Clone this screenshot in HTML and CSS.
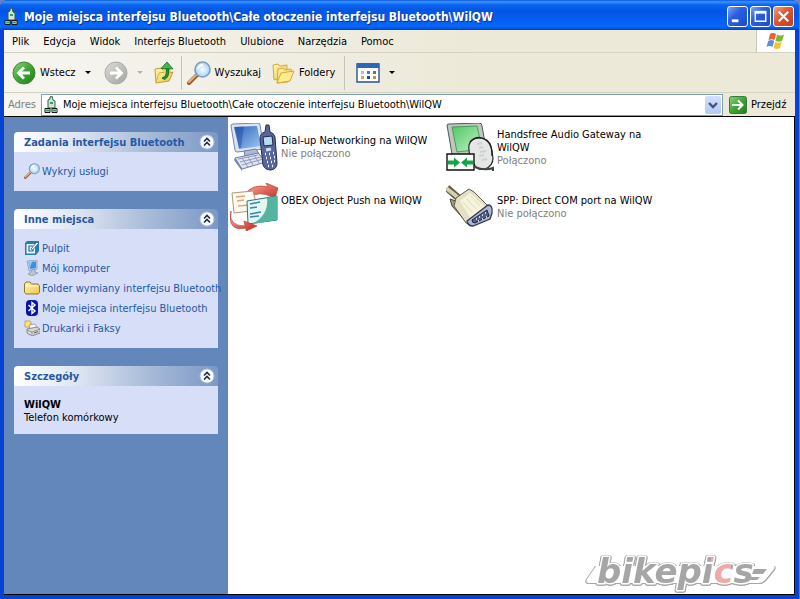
FILE: index.html
```html
<!DOCTYPE html>
<html lang="pl">
<head>
<meta charset="utf-8">
<title>Moje miejsca interfejsu Bluetooth</title>
<link rel="stylesheet" href="styles.css">
</head>
<body>
<svg class="defs" aria-hidden="true">
  <defs>
    <linearGradient id="green" x1="0" y1="0" x2="1" y2="1"><stop offset="0" stop-color="#8bd47c"/><stop offset=".5" stop-color="#3fa535"/><stop offset="1" stop-color="#237a1c"/></linearGradient>
    <linearGradient id="grey" x1="0" y1="0" x2="1" y2="1"><stop offset="0" stop-color="#dcdcd8"/><stop offset="1" stop-color="#a3a3a0"/></linearGradient>
    <linearGradient id="folder" x1="0" y1="0" x2="1" y2="1"><stop offset="0" stop-color="#fff6b0"/><stop offset="1" stop-color="#edc44c"/></linearGradient>
    <radialGradient id="lens"><stop offset="0" stop-color="#f4fcff"/><stop offset="1" stop-color="#a9d7f5"/></radialGradient>
    <linearGradient id="screen" x1="0" y1="0" x2="1" y2="1"><stop offset="0" stop-color="#2f62b8"/><stop offset="1" stop-color="#9cc8f4"/></linearGradient>
    <linearGradient id="mint" x1="0" y1="0" x2="1" y2="1"><stop offset="0" stop-color="#4fc763"/><stop offset="1" stop-color="#c4f3c9"/></linearGradient>
    <linearGradient id="red" x1="0" y1="0" x2="1" y2="1"><stop offset="0" stop-color="#f9b6a4"/><stop offset="1" stop-color="#c8201c"/></linearGradient>
    <linearGradient id="logo" gradientUnits="userSpaceOnUse" x1="0" y1="0" x2="196" y2="0"><stop offset=".66" stop-color="#a6a6a6"/><stop offset=".66" stop-color="#eeaaaa"/><stop offset=".76" stop-color="#eeaaaa"/><stop offset=".76" stop-color="#a6a6a6"/></linearGradient>
    <symbol id="device" viewBox="0 0 14 18">
      <path d="M6 1l2-1 1 4 2 1v7H4V4l2-1z" fill="#cfe6d4" stroke="#385a48"/><path d="M6 6h3v2H6z" fill="#3b9a5c"/>
      <path d="M1 12.500h5v4H1zM8 12.500h5v4H8z" fill="#f4fff4" stroke="#111"/><path d="M2 14.500h3M9 14.500h3" stroke="#2c9a50" stroke-width="2"/>
    </symbol>
    <symbol id="magnifier" viewBox="0 0 24 24">
      <path d="M2 22l9-9" stroke="#9b5a2c" stroke-width="4" stroke-linecap="round"/><path d="M2 21l8-8" stroke="#e8b27c" stroke-width="2" stroke-linecap="round"/>
      <circle cx="15.500" cy="8.500" r="7.500" fill="url(#lens)" stroke="#7d9dbb" stroke-width="1.600"/><path d="M11 8a5 5 0 0 1 5-4" fill="none" stroke="#fff" stroke-width="2"/>
    </symbol>
    <symbol id="chevrons" viewBox="0 0 16 16">
      <circle cx="8" cy="8" r="7" fill="#fff" stroke="#b4c1de"/><path d="M5 7.500l3-3 3 3M5 11.500l3-3 3 3" fill="none" stroke="#142a56" stroke-width="1.600"/>
    </symbol>
  </defs>
</svg>
<div class="window">
  <header class="titlebar">
    <svg class="app-icon" aria-hidden="true"><use href="#device"/></svg>
    <h1>Moje miejsca interfejsu Bluetooth\Całe otoczenie interfejsu Bluetooth\WilQW</h1>
    <button class="caption" aria-label="Minimalizuj"><svg viewBox="0 0 20 20"><path d="M4 14.500h7" stroke="#fff" stroke-width="3"/></svg></button>
    <button class="caption" aria-label="Maksymalizuj"><svg viewBox="0 0 20 20"><path d="M4.500 5v10h11V5z" fill="none" stroke="#fff" stroke-width="1.500"/><path d="M4 5.500h12" stroke="#fff" stroke-width="3"/></svg></button>
    <button class="caption close" aria-label="Zamknij"><svg viewBox="0 0 20 20"><path d="M5 5l10 10M15 5L5 15" stroke="#fff" stroke-width="2.200"/></svg></button>
  </header>
  <div class="frame">
    <div class="menubar">
      <nav class="menus">
        <button>Plik</button><button>Edycja</button><button>Widok</button><button>Interfejs Bluetooth</button><button>Ulubione</button><button>Narzędzia</button><button>Pomoc</button>
      </nav>
      <div class="flag">
        <svg viewBox="0 0 20 18" aria-hidden="true"><path d="M4 2q3-2 6 0L8.500 8q-3-1.500-6 0z" fill="#e8622c"/><path d="M11 2.500q3 2 7 0L16 9q-3 1.500-6.500 0z" fill="#7dbb35"/><path d="M2.200 9q3-2 6 0L6.500 15q-3-2-6 0z" fill="#5590dc"/><path d="M9.200 10q3 1.500 6.500 0L14 16q-3 2-6.500 0z" fill="#f6c030"/></svg>
      </div>
    </div>
    <div class="toolbar">
      <button class="tool"><svg class="i24" viewBox="0 0 24 24"><circle cx="12" cy="12" r="11" fill="url(#green)" stroke="#3b8a37"/><path d="M18 12H7M12 6.500L6.500 12l5.500 5.500" fill="none" stroke="#fff" stroke-width="2.800"/></svg>Wstecz</button>
      <button class="drop" aria-label="Historia wstecz"><i></i></button>
      <button class="tool forward" aria-label="Dalej" disabled><svg class="i24" viewBox="0 0 24 24"><circle cx="12" cy="12" r="11" fill="url(#grey)" stroke="#aaa"/><path d="M6 12h11M12 6.500l5.500 5.500-5.500 5.500" fill="none" stroke="#fff" stroke-width="2.800"/></svg></button>
      <button class="drop" aria-label="Historia dalej" disabled><i></i></button>
      <button class="tool" aria-label="W górę"><svg class="i24" viewBox="0 0 24 24"><path d="M3 8l6-1 2 2 7-1v4l3-1-4 9-13 2z" fill="url(#folder)" stroke="#c99b30"/><path d="M4 21l3-9 7-1" fill="none" stroke="#d8ae45"/><path d="M10 17q5-1 4.500-9H17l-.5 1q1 7-4 9.500z" fill="#259a31" stroke="#187022"/><path d="M15 1l6 7-3-.5H9z" fill="#42b74a" stroke="#187022" stroke-width=".8"/></svg></button>
      <span class="rule"></span>
      <button class="tool"><svg class="i24"><use href="#magnifier"/></svg>Wyszukaj</button>
      <button class="tool folders"><svg class="i24" viewBox="0 0 24 24"><path d="M2 4l5-1 2 2 7-1v11L3 19z" fill="url(#folder)" stroke="#d4a93c"/><path d="M7 8l5-1 2 2 6-1 1 4-4 9-11 1z" fill="url(#folder)" stroke="#d4a93c"/><path d="M6 22l4-10 13-2-4 10z" fill="#ffec8e" stroke="#d4a93c"/></svg>Foldery</button>
      <span class="rule"></span>
      <button class="tool views" aria-label="Widoki"><svg class="i24" viewBox="0 0 24 24"><path d="M1 3h22v18H1z" fill="#fff" stroke="#22539e" stroke-width="1.400"/><path d="M1 2h22v5H1z" fill="#2c67b8"/><g stroke-width="3"><path d="M5 11.500h3" stroke="#b4bfda"/><path d="M11 11.500h3" stroke="#467cc0"/><path d="M17 11.500h3" stroke="#319748"/><path d="M5 16.500h3" stroke="#e2a063"/><path d="M11 16.500h3" stroke="#1b48a5"/><path d="M17 16.500h3" stroke="#c88d42"/></g></svg></button>
      <button class="drop" aria-label="Wybierz widok"><i></i></button>
    </div>
    <form class="address">
      <label for="path">Adres</label>
      <div class="combo">
        <svg class="app-icon" aria-hidden="true"><use href="#device"/></svg>
        <input id="path" type="text" value="Moje miejsca interfejsu Bluetooth\Całe otoczenie interfejsu Bluetooth\WilQW">
        <button type="button" aria-label="Rozwiń"><svg viewBox="0 0 16 18"><path d="M4 7l4 4 4-4" fill="none" stroke="#42557e" stroke-width="2.400"/></svg></button>
      </div>
      <button type="button" class="go"><svg viewBox="0 0 18 18"><rect x=".5" y=".5" width="17" height="17" rx="2" fill="url(#green)" stroke="#39773a"/><path d="M3 9h10M9 4.500L13.500 9 9 13.500" fill="none" stroke="#fff" stroke-width="2"/></svg>Przejdź</button>
    </form>
    <div class="content">
      <aside class="tasks">
        <section class="group">
          <header><h2>Zadania interfejsu Bluetooth</h2><button aria-label="Zwiń"><svg><use href="#chevrons"/></svg></button></header>
          <ul>
            <li><a href="#"><svg><use href="#magnifier"/></svg>Wykryj usługi</a></li>
          </ul>
        </section>
        <section class="group">
          <header><h2>Inne miejsca</h2><button aria-label="Zwiń"><svg><use href="#chevrons"/></svg></button></header>
          <ul>
            <li><a href="#"><svg viewBox="0 0 16 16"><path d="M1 3l2-2h12v10l-3 4H1z" fill="#287da9"/><path d="M2.500 4h8.500v9.500H2.500z" fill="#e6f5ff"/><path d="M9 6H5v5h4V9" fill="none" stroke="#256f9b" stroke-width="1.200"/><path d="M7 9l6-7 1.500 1.500L8.500 10z" fill="#fff" stroke="#215d89" stroke-width=".8"/></svg>Pulpit</a></li>
            <li><a href="#"><svg viewBox="0 0 16 16"><path d="M3 1l10-1v9l-8 2z" fill="#ccd5e4" stroke="#8795b5" stroke-width=".7"/><path d="M4.500 2L12 1.500V8L6 9z" fill="#3392e4"/><path d="M5 2l3-.4L6 8z" fill="#8bd1fa"/><path d="M7 10l4-1v3l3 1-6 3-4-2 3-2z" fill="#bac4d4" stroke="#7c89a0" stroke-width=".6"/></svg>Mój komputer</a></li>
            <li><a href="#"><svg viewBox="0 0 16 16"><path d="M.5 4l1.500-2h4l1.500 2H14l1.500 2v6.500L14 14H2L.5 12.500z" fill="url(#folder)" stroke="#93762e"/><path d="M1.500 6h13" stroke="#fffbd1"/></svg>Folder wymiany interfejsu Bluetooth</a></li>
            <li><a href="#"><svg viewBox="0 0 16 16"><rect x="2" width="12" height="16" rx="4" fill="#0618a4"/><path d="M4.500 5l6.500 6-3 2.500v-11L11 5l-6.500 6" fill="none" stroke="#fff" stroke-width="1.400"/></svg>Moje miejsca interfejsu Bluetooth</a></li>
            <li><a href="#"><svg viewBox="0 0 16 16"><path d="M1 1h5l1 1v5H1z" fill="#ffe184" stroke="#c49a34" stroke-width=".8"/><path d="M5 5l6-1 2 4-7 2z" fill="#fff" stroke="#888" stroke-width=".7"/><path d="M3 9l10-2 3 2v4l-8 3-5-3z" fill="#d6d6d4" stroke="#77777a" stroke-width=".8"/><path d="M3 10l5 2 8-3M8 12v3" fill="none" stroke="#8c8c90" stroke-width=".8"/><path d="M10 13l4-1.500" stroke="#555"/></svg>Drukarki i Faksy</a></li>
          </ul>
        </section>
        <section class="group">
          <header><h2>Szczegóły</h2><button aria-label="Zwiń"><svg><use href="#chevrons"/></svg></button></header>
          <div class="details"><strong>WilQW</strong><span>Telefon komórkowy</span></div>
        </section>
      </aside>
      <main class="files">
        <a class="item" href="#">
          <svg viewBox="0 0 48 48" aria-hidden="true"><path d="M1 3q0-2 2-2l25-1q2 0 2 2l4 24-27 3q-2 0-2-2z" fill="#dce3f1" stroke="#7585ac"/><path d="M4 4l23-1 4 20-22 3z" fill="url(#screen)"/><path d="M5 4l9-.5L11 25H9z" fill="#1f4ea2" opacity=".5"/><path d="M14 28l12-2 3 5-14 2z" fill="#aebbd5" stroke="#7181a5"/><path d="M5 35l23-5 8 9-24 7z" fill="#dfe4ef" stroke="#6e7ca4"/><path d="M8 36l20-4M10 39l21-5M12 42l21-6M12 35l6 9M18 34l5 8M24 32l5 8" stroke="#8d9abd"/><path d="M5 35l7 11v2L4 37z" fill="#7583a6"/><path d="M36 2h3l1 7q4 1 5 5l2 26q0 6-6 7-6 0-8-5L30 16q0-6 5-7z" fill="#59669a" stroke="#262e5a"/><path d="M33 14l9-1 1 9-9 1z" fill="#b4dced" stroke="#20284d"/><path d="M36 27l5-1" stroke="#d4daf0" stroke-width="3"/><path d="M35 31h1m3 0h1m3-1h1M36 35h1m3 0h1m3-1h1M37 39h1m3 0h1m2-1h1M38 43h1m3 0h1" stroke="#f2f5ff" stroke-width="2.400"/></svg>
          <span class="caption-text"><span>Dial-up Networking na WilQW</span><small>Nie połączono</small></span>
        </a>
        <a class="item" href="#">
          <svg viewBox="0 0 48 48" aria-hidden="true"><path d="M1 2q0-1 2-1l30-1q3 0 3 3l5 28-34 6z" fill="#bcc7c0" stroke="#4c5b50"/><path d="M6 4l25-1 5 23-25 3z" fill="url(#mint)" stroke="#3c8c4b" stroke-width=".8"/><path d="M23 22q2-7 10-7 10 0 12 9l2 11q0 8-8 11-8 2-11-5-6-8-5-19z" fill="#e5e7e6" stroke="#272d29" stroke-width="1.200"/><path d="M24 19q7-8 16-2 7 5 6 16" fill="none" stroke="#222" stroke-width="1.400"/><path d="M33 25l4-1M34 29l6-1M33 33l5-1M36 37l5-1M31 21l5-1" stroke="#cdd1cf" stroke-width="2"/><path d="M29 44q9 4 18 1v3" fill="none" stroke="#444" stroke-width="2"/><path d="M1 31h27v16H1z" fill="#fff" stroke="#111" stroke-width="1.400"/><path d="M2 37.500h6v-3l6 5-6 5v-3H2zM27 37.500h-6v-3l-6 5 6 5v-3h6z" fill="#17a544"/></svg>
          <span class="caption-text"><span>Handsfree Audio Gateway na WilQW</span><small>Połączono</small></span>
        </a>
        <a class="item" href="#">
          <svg viewBox="0 0 48 48" aria-hidden="true"><path d="M14 12Q23 0 38 4l-2-4 12 5-4 13-2-4Q29 7 19 15z" fill="url(#red)" stroke="#b54332" stroke-width=".7"/><path d="M2 10l21-2 5 19-24 3z" fill="#fffaf0" stroke="#b79278"/><path d="M6 14l9-1M7 18l7-1M8 23l12-1" stroke="#dda57a" stroke-width="1.500"/><path d="M17 18l30-5v24l-29 4z" fill="#e2f7f2" stroke="#207b74"/><path d="M37 15l10-2v24l-25 4q17-9 15-26z" fill="#54b4a0"/><path d="M20 21l10-2M20 25l7-1M20 31l11-2M20 34l9-1" stroke="#3885a2" stroke-width="1.500"/><path d="M1 28q-3 15 14 15l-1-5 13 5-11 5v-3Q-3 49 1 28z" fill="url(#red)" stroke="#b54332" stroke-width=".7"/></svg>
          <span class="caption-text"><span>OBEX Object Push na WilQW</span></span>
        </a>
        <a class="item" href="#">
          <svg viewBox="0 0 48 48" aria-hidden="true"><path d="M1 5l8 7 6 5" fill="none" stroke="#5d5944" stroke-width="7"/><path d="M0 5l9 7 7 6" fill="none" stroke="#d4d0b3" stroke-width="4"/><path d="M4 16l6 2 16 22-3 2L6 23z" fill="#a29c7c" stroke="#4b4938"/><path d="M10 15l13-9 5 3 15 15-20 17-3-1L8 23z" fill="#e4e0c5" stroke="#5a5747"/><path d="M14 18l10-8 15 14-14 12z" fill="#f6f3dd"/><path d="M17 19l9 10M21 16l9 10M25 13l9 10" stroke="#ded9be"/><path d="M21 38l21-16q5 0 4 8l-2 6-17 7q-5 0-6-5z" fill="#aeb7d4" stroke="#333951" stroke-width="1.300"/><path d="M26 37l15-10 2 6-14 7q-3 0-3-3z" fill="#545e88" stroke="#20243d"/><path d="M30 36h1m2-2h1m2-2h1m2-2h1M32 38h1m3-2h1m3-2h1" stroke="#f5f5fb" stroke-width="1.600"/></svg>
          <span class="caption-text"><span>SPP: Direct COM port na WilQW</span><small>Nie połączono</small></span>
        </a>
        <svg class="watermark" viewBox="0 0 196 40" role="img" aria-label="bikepics">
          <g class="logo-outline">
            <path d="M14 12h176q4 0 2 3l-8 10q-3 4-8 4H8q-5 0-3-4z" fill="#fff"/>
            <text x="15" y="29" fill="url(#logo)">bikepics</text>
            <path d="M172 15h13l-4 5h-11zM168 23h10l-3 3h-9z" fill="#a6a6a6"/>
          </g>
        </svg>
      </main>
    </div>
  </div>
</div>
</body>
</html>
```
FILE: styles.css
```css
* { box-sizing: border-box; }

body {
  margin: 0;
  background: #6c7fc4;
  color: #000;
  font: 11px/13px "DejaVu Sans Condensed", "DejaVu Sans", sans-serif;
}

.defs { position: absolute; width: 0; height: 0; }
svg { display: block; flex: none; }
button { margin: 0; padding: 0; border: 0; background: none; color: inherit; font: inherit; white-space: nowrap; }
a { color: inherit; text-decoration: none; }
h1, h2, ul { margin: 0; padding: 0; font-size: inherit; list-style: none; }

.window {
  display: flex;
  flex-direction: column;
  min-height: 100vh;
  margin-right: 1px;
  border-radius: 8px 8px 0 0;
  background: #0842d4;
}

.titlebar {
  display: flex;
  align-items: center;
  gap: 2px;
  height: 30px;
  padding: 3px 5px 0 4px;
  border-radius: 8px 8px 0 0;
  background: linear-gradient(#0a56d8 0, #3a94ff 6%, #0a64ef 16%, #0255e2 35%, #0560f4 75%, #0668ff 88%, #0344c4 100%);
}
.app-icon { width: 14px; height: 18px; }
.titlebar h1 {
  flex: 1;
  margin-left: 4px;
  color: #fff;
  font: bold 12px/18px "DejaVu Sans Condensed", sans-serif;
  text-shadow: 1px 1px #0b2f8c;
  white-space: nowrap;
}
.caption {
  width: 21px;
  height: 21px;
  border: 1px solid #fff;
  border-radius: 3px;
  background: linear-gradient(135deg, #7ba4f6, #2a5fe0 40%, #1b4bcf);
}
.caption.close { background: linear-gradient(135deg, #f0a189, #df5530 45%, #c33d18); }

.frame {
  display: flex;
  flex: 1;
  flex-direction: column;
  margin: 0 4px 4px;
  background: linear-gradient(90deg, #f6f5f1, #ece9d8 60%);
}

.menubar { display: flex; height: 23px; border-bottom: 1px solid #d6d2c2; }
.menus { display: flex; flex: 1; align-items: center; gap: 14px; padding-left: 8px; }
.flag { display: grid; place-items: center; width: 39px; border-left: 1px solid #c9c5b4; background: #fff; }
.flag svg { width: 20px; height: 18px; }

.toolbar {
  display: flex;
  align-items: center;
  height: 40px;
  padding-left: 8px;
  border-bottom: 1px solid #d6d2c2;
}
.tool { display: flex; align-items: center; gap: 4px; }
.i24 { width: 24px; height: 24px; }
.drop { display: grid; place-items: center; width: 24px; height: 24px; }
.drop i { border: 3px solid transparent; border-top-color: #000; border-bottom: 0; }
.drop:disabled i { border-top-color: #b8b5a8; }
.forward { margin-left: 4px; }
.rule { width: 1px; height: 34px; margin: 0 5px; background: #c8c5b6; }
.folders { margin: 0 4px 0 10px; }
.views { margin-left: 6px; }

.address { display: flex; align-items: center; height: 24px; border-bottom: 1px solid #000; }
.address label { width: 37px; padding-left: 4px; color: #808080; }
.combo {
  display: flex;
  flex: 1;
  align-items: center;
  height: 22px;
  padding: 1px 1px 1px 2px;
  border: 1px solid #7f9db9;
  background: #fff;
}
.combo input { flex: 1; min-width: 0; margin: 0; padding: 0 0 0 5px; border: 0; outline: 0; background: none; color: #000; font: inherit; }
.combo button { width: 16px; height: 18px; border-radius: 2px; background: linear-gradient(#d3e0fd, #b3c8f6); }
.go { display: flex; align-items: center; gap: 4px; width: 72px; padding-left: 6px; }
.go svg { width: 18px; height: 18px; }

.content { display: flex; flex: 1; background: #fff; border-right: 1px solid #000; border-bottom: 1px solid #000; }
.tasks {
  display: flex;
  flex: none;
  flex-direction: column;
  gap: 18px;
  width: 224px;
  padding: 15px 10px;
  background: #6487bb;
}
.group header {
  display: flex;
  align-items: center;
  justify-content: space-between;
  height: 20px;
  padding: 0 3px 0 10px;
  border-radius: 4px 4px 0 0;
  background: linear-gradient(90deg, #fff, #dfe6f2 30%, #a9bcd9 65%, #7b98c6);
}
.group h2 { color: #2658a8; font-weight: bold; white-space: nowrap; }
.group header svg { width: 16px; height: 16px; }
.group ul, .details { background: #d6dff7; }
.group ul { padding: 9px 0 10px 10px; color: #2658a8; }
.group a { display: flex; align-items: center; gap: 2px; height: 20px; white-space: nowrap; }
.group a svg { width: 16px; height: 16px; }
.details { display: flex; flex-direction: column; padding: 12px 10px 10px; }

.files {
  position: relative;
  display: grid;
  flex: 1;
  grid-template-columns: repeat(auto-fill, 212px);
  grid-auto-rows: 48px;
  gap: 12px 4px;
  align-content: start;
  padding: 6px 2px;
}
.item { display: flex; align-items: center; gap: 3px; }
.item svg { width: 48px; height: 48px; }
.caption-text { display: flex; flex-direction: column; max-width: 161px; min-height: 26px; }
.caption-text small { color: #808080; font-size: 11px; }

.watermark { position: absolute; right: 16px; bottom: 0; width: 196px; height: 40px; }
.watermark text {
  font: italic bold 34px "DejaVu Sans", sans-serif;
  stroke: #fff;
  stroke-width: 3px;
  stroke-linejoin: round;
  paint-order: stroke;
}
.logo-outline { filter: drop-shadow(1px 0 #a6a6a6) drop-shadow(-1px 0 #a6a6a6) drop-shadow(0 1px #a6a6a6); }
```
